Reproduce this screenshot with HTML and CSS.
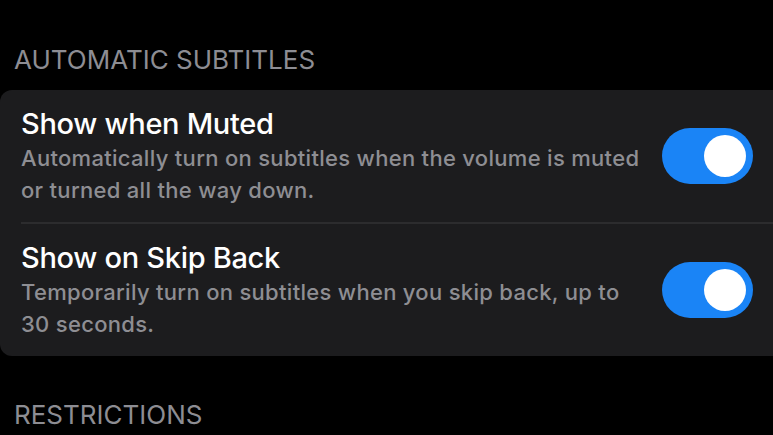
FILE: index.html
```html
<!DOCTYPE html>
<html lang="en">
<head>
    <meta charset="utf-8">
    <title>Subtitles</title>
    <link rel="stylesheet" href="styles.css">
</head>
<body>
    <h2 class="group-title first">AUTOMATIC SUBTITLES</h2>
    <div class="card">
        <div class="row">
            <div class="row-text">
                <div class="row-title">Show when Muted</div>
                <div class="row-desc">Automatically turn on subtitles when the volume is muted or turned all the way down.</div>
            </div>
            <span class="toggle on"><span class="knob"></span></span>
        </div>
        <div class="row">
            <div class="row-text">
                <div class="row-title">Show on Skip Back</div>
                <div class="row-desc">Temporarily turn on subtitles when you skip back, up to 30 seconds.</div>
            </div>
            <span class="toggle on"><span class="knob"></span></span>
        </div>
    </div>
    <h2 class="group-title">RESTRICTIONS</h2>
</body>
</html>
```
FILE: styles.css
```css
body {
    margin: 0;
    background: #000;
    font-family: Inter, "Noto Sans", sans-serif;
    overflow: hidden;
}

.group-title {
    margin: 0;
    padding: 44px 0 16px 14px;
    font-size: 26px;
    font-weight: 400;
    line-height: 30px;
    color: #8d8d93;
}

.group-title.first {
    padding-top: 45px;
    padding-bottom: 15px;
}

.card {
    background: #1c1c1e;
    border-radius: 12px 0 0 12px;
}

.row {
    display: flex;
    align-items: center;
    margin-left: 21px;
    padding: 16px 20px 16px 0;
    height: 100px;
}

.row + .row {
    border-top: 2px solid #2c2c2e;
}

.row-text {
    flex: 1;
}

.row-title {
    font-size: 29px;
    font-weight: 500;
    letter-spacing: -0.3px;
    line-height: 36px;
    color: #fff;
}

.row-desc {
    font-size: 22px;
    font-weight: 500;
    letter-spacing: 0.3px;
    line-height: 32px;
    color: #8e8e93;
    max-width: 630px;
}

.toggle {
    width: 91px;
    height: 56px;
    border-radius: 28px;
    background: #3a3a3c;
    display: flex;
    align-items: center;
    padding: 0 7px;
    box-sizing: border-box;
}

.toggle.on {
    background: #1a84f6;
    justify-content: flex-end;
}

.knob {
    width: 42px;
    height: 42px;
    border-radius: 50%;
    background: #fff;
}
```
